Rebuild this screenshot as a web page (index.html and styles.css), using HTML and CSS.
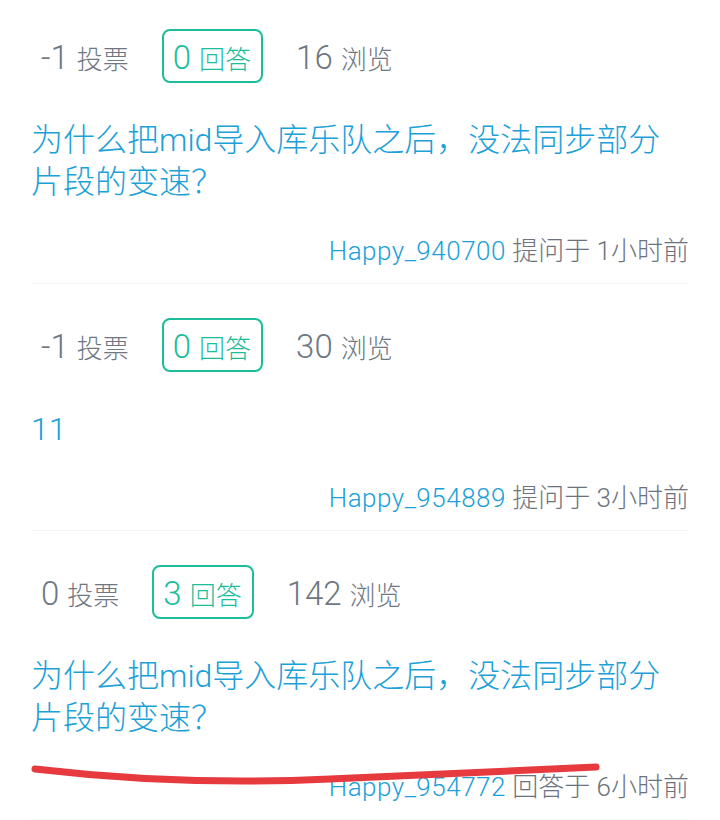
FILE: index.html
```html
<!DOCTYPE html>
<html lang="zh-CN">
<head>
<meta charset="utf-8">
<title>问答列表</title>
<link rel="stylesheet" href="styles.css">
</head>
<body>
<div class="page">
  <ul class="list">
    <li class="item">
      <div class="stats">
        <div class="stat"><span class="num">-1</span><span class="label">投票</span></div>
        <div class="stat answers"><span class="num">0</span><span class="label">回答</span></div>
        <div class="stat"><span class="num">16</span><span class="label">浏览</span></div>
      </div>
      <div class="title">为什么把mid导入库乐队之后，没法同步部分片段的变速？</div>
      <div class="meta"><span class="user">Happy_940700</span> 提问于 1小时前</div>
    </li>
    <li class="item">
      <div class="stats">
        <div class="stat"><span class="num">-1</span><span class="label">投票</span></div>
        <div class="stat answers"><span class="num">0</span><span class="label">回答</span></div>
        <div class="stat"><span class="num">30</span><span class="label">浏览</span></div>
      </div>
      <div class="title">11</div>
      <div class="meta"><span class="user">Happy_954889</span> 提问于 3小时前</div>
    </li>
    <li class="item">
      <div class="stats">
        <div class="stat"><span class="num">0</span><span class="label">投票</span></div>
        <div class="stat answers"><span class="num">3</span><span class="label">回答</span></div>
        <div class="stat"><span class="num">142</span><span class="label">浏览</span></div>
      </div>
      <div class="title">为什么把mid导入库乐队之后，没法同步部分片段的变速？</div>
      <div class="meta"><span class="user">Happy_954772</span> 回答于 6小时前</div>
    </li>
  </ul>
  <svg class="scribble" width="720" height="820" viewBox="0 0 720 820" aria-hidden="true">
    <path d="M35 769 Q180 786 330 779 T596 767" fill="none" stroke="#e63a3f" stroke-width="7" stroke-linecap="round"/>
  </svg>
</div>
</body>
</html>
```

FILE: styles.css
```css
html, body {
  margin: 0;
  padding: 0;
  background: #ffffff;
}

body {
  font-family: Roboto, "Noto Sans CJK SC", sans-serif;
  font-weight: 300;
  overflow: hidden;
}

.page {
  position: relative;
  width: 720px;
  height: 820px;
  overflow: hidden;
}

.list {
  list-style: none;
  margin: 0 31px;
  padding: 0;
}

.item {
  padding: 34px 0 17px;
  border-bottom: 1px solid #f2f3f5;
}

.item:first-child {
  padding-top: 29px;
}

.stats {
  display: flex;
  align-items: center;
  gap: 23px;
}

.stat {
  box-sizing: border-box;
  height: 54px;
  padding: 2px 8px 0;
  border: 2px solid transparent;
  border-radius: 8px;
  display: flex;
  align-items: baseline;
  justify-content: center;
  gap: 8px;
  color: #6e7782;
}

.stat .num {
  font-size: 33px;
  line-height: 1;
  margin-top: 8px;
}

.stat .label {
  font-size: 26px;
  line-height: 1;
}

.stat.answers {
  padding-left: 9px;
  padding-right: 10px;
  border-color: #1cbd9a;
  color: #1cbd9a;
}

.title {
  margin-top: 36px;
  font-size: 32px;
  line-height: 42px;
  color: #1ca0d8;
}

.meta {
  margin-top: 33px;
  font-size: 26px;
  line-height: 30px;
  text-align: right;
  color: #6c737d;
}

.meta .user {
  color: #1ca0d8;
  letter-spacing: 0.5px;
}

.scribble {
  position: absolute;
  left: 0;
  top: 0;
  pointer-events: none;
}
```
